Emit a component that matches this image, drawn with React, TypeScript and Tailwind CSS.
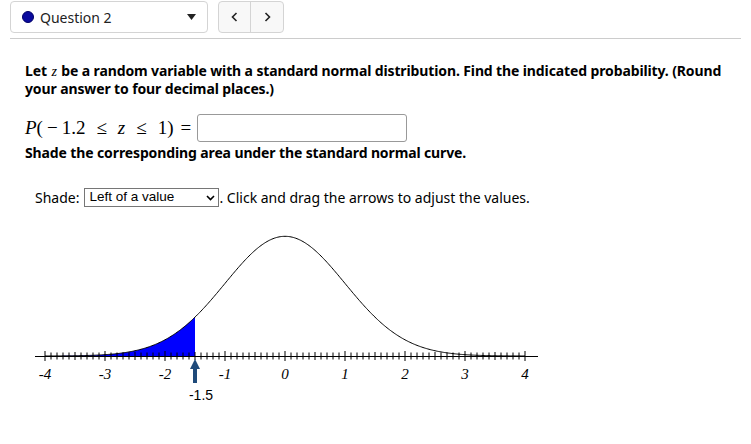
import React from 'react';

const X0 = 285;
const UNIT = 60;
const AXIS_Y = 355;
const SCALE = 300;

const pdf = (z: number) => Math.exp(-(z * z) / 2) / Math.sqrt(2 * Math.PI);
const px = (z: number) => X0 + UNIT * z;
const py = (z: number) => AXIS_Y - SCALE * pdf(z);

const curvePath = (from: number, to: number) => {
  const pts: string[] = [];
  for (let z = from; z <= to + 1e-9; z += 0.02) {
    pts.push(`${px(z).toFixed(2)},${py(z).toFixed(2)}`);
  }
  return pts;
};

const NormalChart: React.FC<{ cut: number }> = ({ cut }) => {
  const line = curvePath(-4, 4);
  const shade = [`${px(-4)},${AXIS_Y}`, ...curvePath(-4, cut), `${px(cut)},${py(cut)}`, `${px(cut)},${AXIS_Y}`];
  const ticks = [];
  for (let i = -40; i <= 40; i++) {
    const x = px(i / 10);
    const h = i % 10 === 0 ? 5 : i % 5 === 0 ? 4 : 3.5;
    ticks.push(<line key={i} x1={x} x2={x} y1={AXIS_Y - h} y2={AXIS_Y + h} stroke="#000" strokeWidth={1} />);
  }
  return (
    <svg width="751" height="190" viewBox="0 220 751 190" className="block">
      <polygon points={shade.join(' ')} fill="#0000ff" />
      <polyline points={line.join(' ')} fill="none" stroke="#000" strokeWidth={1} />
      <line x1={35} x2={538} y1={AXIS_Y + 0.5} y2={AXIS_Y + 0.5} stroke="#000" strokeWidth={1} />
      {ticks}
      {[-4, -3, -2, -1, 0, 1, 2, 3, 4].map(n => (
        <text key={n} x={px(n)} y={378} textAnchor="middle" fontFamily="'Liberation Serif', serif" fontStyle="italic" fontSize="15" fill="#000">
          {n}
        </text>
      ))}
      <polygon points={`${px(cut)},358 ${px(cut) - 5},368 ${px(cut) + 5},368`} fill="#1f4a7a" />
      <rect x={px(cut) - 2} y={367} width={4} height={15} fill="#1f4a7a" />
      <text x={px(cut) + 6} y={399} textAnchor="middle" fontFamily="'Liberation Sans', Arial, sans-serif" fontSize="14" fill="#000">
        -1.5
      </text>
    </svg>
  );
};

const serif = { fontFamily: "'Liberation Serif', serif" };

export default function App() {
  return (
    <div className="w-[751px] h-[444px] bg-white overflow-hidden text-black" style={{ fontFamily: "'Noto Sans', sans-serif" }}>
      <div className="flex gap-[10px] px-[10px] pt-[1px]">
        <div className="w-[198px] h-[32px] border border-[#d4d4d4] rounded-[4px] flex items-center pl-[11px] pr-[11px]">
          <span className="w-[12px] h-[12px] rounded-full bg-[#0a0a9e] border border-[#000066]" />
          <span className="ml-[6px] text-[14px] text-[#222]">Question 2</span>
          <svg className="ml-auto" width="9" height="6" viewBox="0 0 9 6">
            <path d="M0 0 L9 0 L4.5 6 Z" fill="#222" />
          </svg>
        </div>
        <div className="flex h-[32px] border border-[#d4d4d4] rounded-[4px] bg-[#f8f8f8]">
          <button className="w-[32px] h-full flex items-center justify-center border-r border-[#d4d4d4]">
            <svg width="7" height="10" viewBox="0 0 7 10"><path d="M5.5 1 L1.5 5 L5.5 9" fill="none" stroke="#222" strokeWidth="1.6" /></svg>
          </button>
          <button className="w-[32px] h-full flex items-center justify-center">
            <svg width="7" height="10" viewBox="0 0 7 10"><path d="M1.5 1 L5.5 5 L1.5 9" fill="none" stroke="#222" strokeWidth="1.6" /></svg>
          </button>
        </div>
      </div>
      <div className="mx-[10px] mt-[5px] border-t border-[#cccccc]" />
      <div className="px-[25px] pt-[23px]">
        <p className="text-[14px] font-bold leading-[17px] tracking-[-0.12px]">
          Let <span className="font-normal italic px-[1px]" style={serif}>z</span> be a random variable with a standard normal distribution. Find the indicated probability. (Round your answer to four decimal places.)
        </p>
        <div className="flex items-center mt-[17px] h-[28px]">
          <span className="text-[19px] flex items-center whitespace-pre" style={serif}>
            <i>P</i>(<span className="ml-[4px] mr-[4px]">−</span>1.2<span className="mx-[11px]">≤</span><i>z</i><span className="mx-[11px]">≤</span>1)<span className="ml-[7px] mr-[6px]">=</span>
          </span>
          <div className="w-[210px] h-[28px] border border-[#999] rounded-[3px]" />
        </div>
        <p className="text-[14px] font-bold mt-[2px] leading-[17px] tracking-[-0.12px]">Shade the corresponding area under the standard normal curve.</p>
        <div className="flex items-center mt-[26px] pl-[10px] text-[14px]">
          <span className="mr-[5px]">Shade:</span>
          <div className="w-[135px] h-[19px] border border-[#767676] flex items-center pl-[4px] pr-[3px]" style={{ fontFamily: "'Liberation Sans', Arial, sans-serif" }}>
            <span className="text-[13.5px]">Left of a value</span>
            <svg className="ml-auto" width="9" height="6" viewBox="0 0 9 6"><path d="M1 1 L4.5 4.5 L8 1" fill="none" stroke="#000" strokeWidth="1.6" /></svg>
          </div>
          <span>. Click and drag the arrows to adjust the values.</span>
        </div>
      </div>
      <div className="mt-[13px]">
        <NormalChart cut={-1.5} />
      </div>
    </div>
  );
}
